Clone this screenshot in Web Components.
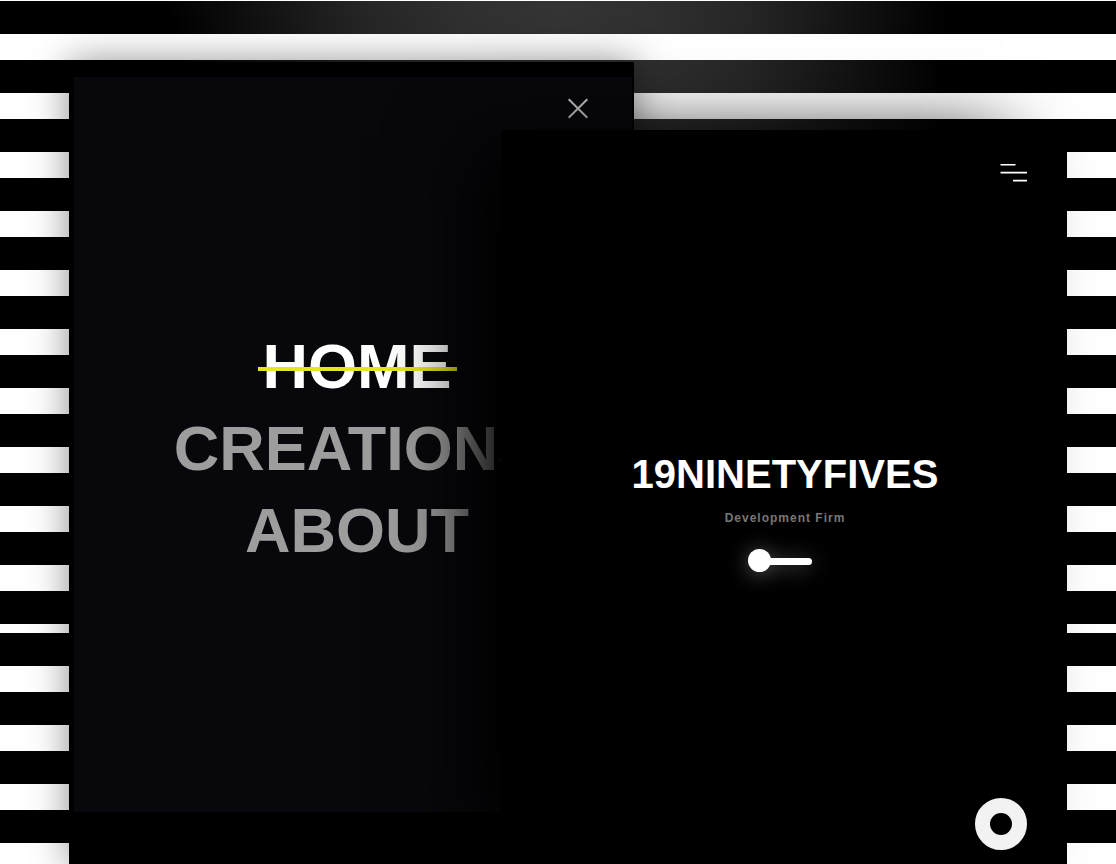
<!DOCTYPE html>
<html lang="en">
<head>
<meta charset="utf-8">
<meta name="viewport" content="width=device-width, initial-scale=1">
<title>19NINETYFIVES</title>
<style>
  body { margin: 0; font-family: "Liberation Sans", Arial, sans-serif; background: #fff; }
</style>
</head>
<body>
<striped-stage>
  <menu-screen slot="menu">
    <close-button slot="close"></close-button>
    <menu-link href="#home" active>HOME</menu-link>
    <menu-link href="#creations">CREATIONS</menu-link>
    <menu-link href="#about">ABOUT</menu-link>
  </menu-screen>
  <home-screen slot="home">
    <menu-button slot="menu"></menu-button>
    <brand-title>19NINETYFIVES<span slot="tagline">Development Firm</span></brand-title>
    <glow-slider></glow-slider>
    <ring-button slot="action"></ring-button>
  </home-screen>
</striped-stage>
<script>
const define = (name, html, setup) => {
  const template = document.createElement('template');
  template.innerHTML = html;
  customElements.define(name, class extends HTMLElement {
    constructor() {
      super();
      this.attachShadow({ mode: 'open' }).append(template.content.cloneNode(true));
    }
    connectedCallback() { if (setup) setup(this); }
  });
};

define('striped-stage', `
<style>
  :host {
    display: grid;
    min-height: 100vh;
    overflow: hidden;
    grid-template-columns: 69px 432fr 133fr 433fr 49px;
    grid-template-rows: 62px 68px 1fr;
    background:
      repeating-linear-gradient(#fff 0 1px, transparent 1px 34px, #fff 34px 59px) 0 0 / 100% 633px no-repeat,
      repeating-linear-gradient(transparent 0 33px, #fff 33px 59px) 0 633px / 100% calc(100% - 633px) no-repeat,
      linear-gradient(90deg, #000 15%, #262626 33%, #303030 42%, #343434 50%, #303030 58%, #262626 67%, #000 85%);
  }
  ::slotted([slot=menu]) { grid-column: 2 / 4; grid-row: 2 / 4; z-index: 1; }
  ::slotted([slot=home]) { grid-column: 3 / 5; grid-row: 3 / 4; z-index: 2; }
</style>
<slot name="menu"></slot>
<slot name="home"></slot>`);

define('menu-screen', `
<style>
  :host {
    display: flex;
    min-width: 0;
    box-sizing: border-box;
    padding: 15px 2px 52px 5px;
    background: #000;
    box-shadow: 0 0 36px rgba(0, 0, 0, .45);
  }
  section { flex: 1; min-width: 0; display: flex; flex-direction: column; background: #08080c; }
  header { display: flex; justify-content: flex-end; padding: 16px 38px 0 0; }
  nav {
    flex: 1; display: flex; flex-direction: column; align-items: center; justify-content: center;
    padding: 0 0 42px 8px;
  }
</style>
<section>
  <header><slot name="close"></slot></header>
  <nav aria-label="Main"><slot></slot></nav>
</section>`);

define('menu-link', `
<style>
  :host { display: block; font-size: 63px; line-height: 82px; font-weight: 700; }
  a { display: block; position: relative; padding: 0 5px; color: #9d9d9e; text-decoration: none; }
  :host([active]) a { color: #fff; }
  :host([active]) a::after {
    content: ""; position: absolute; left: 0; right: 0; top: 42px; height: 4px; background: #e6e32c;
  }
</style>
<a><slot></slot></a>`, el => { el.shadowRoot.querySelector('a').href = el.getAttribute('href'); });

define('close-button', `
<style>
  :host { display: block; }
  button { display: block; padding: 0; border: 0; background: none; color: #ccc; cursor: pointer; }
  svg { display: block; }
</style>
<button type="button" aria-label="Close menu">
  <svg width="32" height="32" viewBox="0 0 32 32" fill="none" stroke="currentColor" stroke-width="2">
    <path d="M6.7 6.2 25.3 24.8M25.3 6.2 6.7 24.8"/>
  </svg>
</button>`);

define('home-screen', `
<style>
  :host {
    display: flex;
    min-width: 0;
    flex-direction: column;
    box-sizing: border-box;
    padding: 30px 40px 14px;
    background: #000;
    box-shadow: -47px -6px 74px -16px #000;
  }
  header, footer { display: flex; justify-content: flex-end; }
  main { flex: 1; display: flex; flex-direction: column; align-items: center; justify-content: center; padding: 41px 0 0 2px; }
</style>
<header><slot name="menu"></slot></header>
<main><slot></slot></main>
<footer><slot name="action"></slot></footer>`);

define('menu-button', `
<style>
  :host { display: block; }
  button { display: block; padding: 0; border: 0; background: none; color: #fff; cursor: pointer; }
  svg { display: block; }
</style>
<button type="button" aria-label="Open menu">
  <svg width="27" height="24" viewBox="0 0 27 24" stroke="currentColor" stroke-width="1.6">
    <path d="M.5 4.7h15M.5 12.6H27M13 20.6h14"/>
  </svg>
</button>`);

define('brand-title', `
<style>
  :host { display: block; text-align: center; }
  h1 { margin: 0; color: #fff; font-size: 40px; line-height: 48px; font-weight: 700; }
  p { margin: 12px 0 0; color: #777; font-size: 12px; line-height: 16px; font-weight: 700; letter-spacing: 1px; }
</style>
<h1><slot></slot></h1>
<p><slot name="tagline"></slot></p>`);

define('glow-slider', `
<style>
  :host { display: block; margin: 24px 10px 0 0; }
  input {
    appearance: none; display: block; width: 64px; height: 23px; margin: 0; background: none;
    filter: drop-shadow(0 2px 10px rgba(255, 255, 255, .35));
  }
  input::-webkit-slider-runnable-track {
    height: 7px; border-radius: 4px;
    background: linear-gradient(90deg, transparent 12px, #fff 12px);
  }
  input::-webkit-slider-thumb {
    appearance: none; width: 23px; height: 23px; margin-top: -9px; border-radius: 50%; background: #fff;
  }
</style>
<input type="range" min="0" max="100" value="0" aria-label="Enter">`);

define('ring-button', `
<style>
  :host { display: block; }
  button {
    display: block; box-sizing: border-box; width: 52px; height: 52px; padding: 0;
    border: 15px solid #f2f2f2; border-radius: 50%; background: #000; cursor: pointer;
  }
</style>
<button type="button" aria-label="Record"></button>`);
</script>
</body>
</html>
